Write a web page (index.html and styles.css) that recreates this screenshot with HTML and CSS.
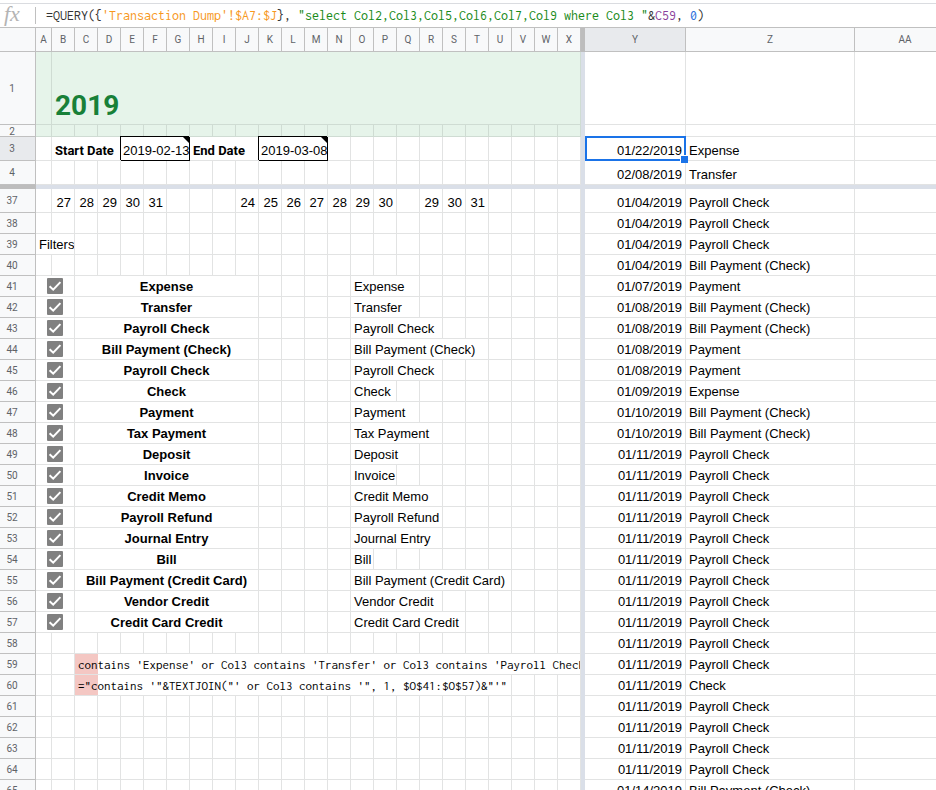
FILE: index.html
```html
<!DOCTYPE html>
<html lang="en">
<head>
<meta charset="utf-8">
<title>Transactions 2019</title>
<link rel="stylesheet" href="styles.css">
</head>
<body>
<div class="formula-bar">
  <span class="fx">fx</span>
  <div class="formula" role="textbox" aria-label="Formula" contenteditable="true" spellcheck="false">=QUERY({<span class="range">'Transaction Dump'!$A7:$J</span>}, <span class="string">"select Col2,Col3,Col5,Col6,Col7,Col9 where Col3 "</span>&amp;<span class="ref">C59</span>, <span class="number">0</span>)</div>
</div>
<main class="viewport">
  <table class="sheet">
    <colgroup>
      <col class="col-head"><col class="col-a"><col class="col-day" span="23"><col class="col-freeze"><col class="col-y"><col class="col-z"><col class="col-aa">
    </colgroup>
    <thead><tr id="letters"></tr></thead>
    <tbody id="rows"></tbody>
  </table>
</main>
<script src="sheet.js"></script>
</body>
</html>
```
FILE: styles.css
```css
* { box-sizing: border-box; }

body {
  margin: 0;
  height: 100vh;
  overflow: hidden;
  display: flex;
  flex-direction: column;
  background: #fff;
  color: #000;
  font: 13px/15px "Liberation Sans", Arial, sans-serif;
}

/* Formula bar */
.formula-bar {
  flex: none;
  display: flex;
  align-items: center;
  height: 25px;
  margin-top: 3px;
  border-top: 1px solid #dadce0;
  border-bottom: 1px solid #c0c0c0;
}
.fx {
  width: 36px;
  height: 17px;
  padding-left: 4px;
  border-right: 1px solid #c0c0c0;
  color: #b4b4b4;
  font: italic 22px/14px "Liberation Serif", serif;
}
.formula {
  flex: 1;
  padding-left: 10px;
  outline: 0;
  white-space: pre;
  overflow: hidden;
  color: #333;
  font: 14px/20px Inconsolata, "Noto Sans Mono CJK SC", "Liberation Mono", monospace;
}
.range { color: #f7981d; }
.string { color: #188a18; }
.ref { color: #8b3f9c; }
.number { color: #2a6fdb; }

/* Grid */
.viewport { flex: 1; min-height: 0; overflow: hidden; }
.sheet {
  width: 100%;
  table-layout: fixed;
  border-collapse: separate;
  border-spacing: 0;
}
.col-head { width: 36px; }
.col-a { width: 16px; }
.col-day { width: 23px; }
.col-freeze { width: 4px; }
.col-y { width: 101px; }
.col-z { width: 169px; }
.col-aa { width: 101px; }

th {
  padding: 0;
  border: solid #c0c0c0;
  border-width: 0 1px 1px 0;
  background: #f8f9fa;
  color: #5f6368;
  font: 10px/15px Roboto, sans-serif;
}
tbody th { padding-right: 11px; }
th.active { background: #e8eaed; }
.row-label { height: 11px; line-height: 14px; }
.r-thin th { overflow: hidden; }

td {
  padding: 0 3px 2px;
  border: solid #e2e3e3;
  border-width: 0 1px 1px 0;
  vertical-align: bottom;
  white-space: nowrap;
  overflow: hidden;
}
.head-row { height: 24px; }
.r-title { height: 73px; }
.r-thin { height: 12px; }
.r-tall { height: 24px; }
.r-std { height: 21px; }
.r-freeze { height: 4px; }

.freeze, .r-freeze td { padding: 0; border: 0; background: #dadfe8; }
.head-row .freeze, .r-freeze th { padding: 0; border: 0; background: #bdbdbd; }

.green { background: #e6f4ea; border-color: #cfdcd3; }
.title {
  padding-bottom: 3px;
  color: #188038;
  font: bold 28px/30px Roboto, sans-serif;
}
.num { text-align: right; }
.name { text-align: center; font-weight: bold; }
.caption { font-family: Roboto, sans-serif; font-weight: bold; }
.code {
  font: 13px/15px Inconsolata, "Noto Sans Mono CJK SC", "Liberation Mono", monospace;
  background: linear-gradient(#f4c7c3, #f4c7c3) 0 0 / 23px 100% no-repeat;
}

/* Boxed date with a note marker in its corner */
.boxed {
  position: relative;
  padding-left: 2px;
  border-color: #000;
  background: #fff;
  box-shadow: -1px -1px 0 #000;
}
.boxed::after {
  content: "";
  position: absolute;
  top: 0;
  right: 0;
  border-top: 6px solid #000;
  border-left: 6px solid transparent;
}

/* Selected cell with its fill handle */
.selected { position: relative; overflow: visible; }
.selected::before {
  content: "";
  position: absolute;
  inset: -1px -1px -1px 0;
  border: 2px solid #1a73e8;
}
.selected::after {
  content: "";
  position: absolute;
  right: -3px;
  bottom: -3px;
  width: 7px;
  height: 7px;
  border: solid #fff;
  border-width: 1px 0 0 1px;
  background: #1a73e8;
}

.tick { padding: 0; vertical-align: middle; }
.tick input {
  appearance: none;
  display: block;
  width: 16px;
  height: 16px;
  margin: 0 auto;
  border-radius: 1px;
  background: #808080;
}
.tick input:checked {
  background: #808080 url("data:image/svg+xml,%3Csvg xmlns='http://www.w3.org/2000/svg' viewBox='0 0 16 16'%3E%3Cpath d='M2.6 8.2 6.2 11.7 13.4 4.1' fill='none' stroke='white' stroke-width='2'/%3E%3C/svg%3E");
}
```
FILE: sheet.js
```js
const letters = [..."ABCDEFGHIJKLMNOPQRSTUVWX"];
const last = letters.length;

// Filter name -> how many columns its unwrapped text runs across from O
const filters = [
  ["Expense", 3], ["Transfer", 3], ["Payroll Check", 4], ["Bill Payment (Check)", 6],
  ["Payroll Check", 4], ["Check", 2], ["Payment", 3], ["Tax Payment", 4], ["Deposit", 3],
  ["Invoice", 2], ["Credit Memo", 4], ["Payroll Refund", 4], ["Journal Entry", 4],
  ["Bill", 1], ["Bill Payment (Credit Card)", 7], ["Vendor Credit", 4], ["Credit Card Credit", 5]
];

const PC = "Payroll Check", BP = "Bill Payment (Check)";
const results = [
  ["04", PC], ["04", PC], ["04", PC], ["04", BP], ["07", "Payment"], ["08", BP], ["08", BP],
  ["08", "Payment"], ["08", "Payment"], ["09", "Expense"], ["10", BP], ["10", BP],
  ...Array(11).fill(["11", PC]), ["11", "Check"], ...Array(4).fill(["11", PC]), ["14", BP]
];

const cell = (content = "", cls = "", span = 1) =>
  `<td class="${cls}" colspan="${span}">${content}</td>`;

// cells: { columnLetter: [content, class, span] }
function row(number, size, cells, date = "", type = "", opts = {}) {
  let html = `<th scope="row" class="${opts.active ? "active" : ""}">` +
    (size === "r-thin" ? `<div class="row-label">${number}</div>` : number) + "</th>";
  for (let i = 0; i < last;) {
    const [content, cls, span = 1] = cells[letters[i]] || ["", opts.fill || ""];
    html += cell(content, cls, span);
    i += span;
  }
  html += cell("", "freeze") + cell(date, opts.active ? "num selected" : "num") + cell(type) + cell();
  return `<tr class="${size}">${html}</tr>`;
}

const head = document.getElementById("letters");
head.className = "head-row";
head.innerHTML = "<th></th>" +
  letters.map(l => `<th scope="col">${l}</th>`).join("") +
  '<td class="freeze"></td><th scope="col" class="active">Y</th><th scope="col">Z</th><th scope="col">AA</th>';

let body = row(1, "r-title", { B: ["2019", "green title", 23] }, "", "", { fill: "green" });
body += row(2, "r-thin", {}, "", "", { fill: "green" });
body += row(3, "r-tall", {
  B: ["Start Date", "caption", 3], E: ["2019-02-13", "boxed", 3],
  H: ["End Date", "caption", 3], K: ["2019-03-08", "boxed", 3]
}, "01/22/2019", "Expense", { active: true });
body += row(4, "r-tall", {}, "02/08/2019", "Transfer");
body += '<tr class="r-freeze"><th></th><td colspan="28"></td></tr>';

results.forEach(([day, type], index) => {
  const n = 37 + index;
  const cells = {};
  if (n === 37) {
    [..."BCDEF"].forEach((l, i) => cells[l] = [27 + i, "num"]);
    [..."JKLMNOP"].forEach((l, i) => cells[l] = [24 + i, "num"]);
    [..."RST"].forEach((l, i) => cells[l] = [29 + i, "num"]);
  }
  if (n === 39) cells.A = ["Filters", "", 2];
  const filter = filters[n - 41];
  if (filter) {
    cells.A = [`<input type="checkbox" id="filter-${n}" checked>`, "tick", 2];
    cells.C = [`<label for="filter-${n}">${filter[0]}</label>`, "name", 8];
    cells.O = [filter[0], "", filter[1]];
  }
  if (n === 59) cells.C = ["contains 'Expense' or Col3 contains 'Transfer' or Col3 contains 'Payroll Check", "code", 22];
  if (n === 60) cells.C = [`="contains '"&amp;TEXTJOIN("' or Col3 contains '", 1, $O$41:$O$57)&amp;"'"`, "code", 19];
  body += row(n, n === 37 ? "r-tall" : "r-std", cells, `01/${day}/2019`, type);
});
document.getElementById("rows").innerHTML = body;
```
